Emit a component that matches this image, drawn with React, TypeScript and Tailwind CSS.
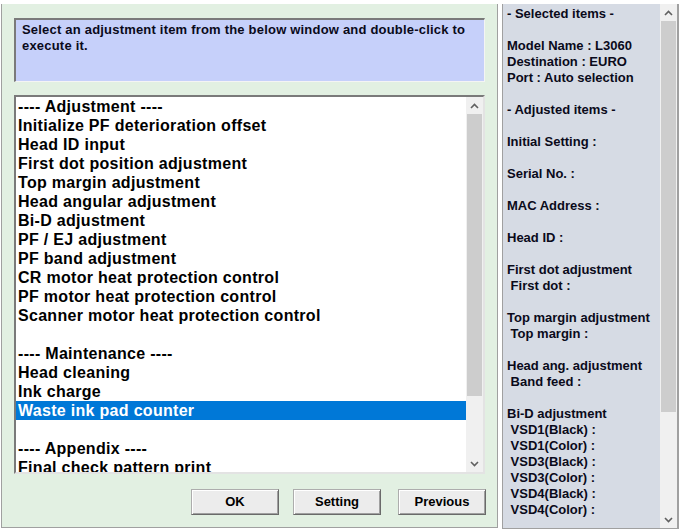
import React from 'react'

const listItems = [
  '---- Adjustment ----',
  'Initialize PF deterioration offset',
  'Head ID input',
  'First dot position adjustment',
  'Top margin adjustment',
  'Head angular adjustment',
  'Bi-D adjustment',
  'PF / EJ adjustment',
  'PF band adjustment',
  'CR motor heat protection control',
  'PF motor heat protection control',
  'Scanner motor heat protection control',
  '',
  '---- Maintenance ----',
  'Head cleaning',
  'Ink charge',
  'Waste ink pad counter',
  '',
  '---- Appendix ----',
  'Final check pattern print',
]

const infoLines = [
  '- Selected items -',
  '',
  'Model Name : L3060',
  'Destination : EURO',
  'Port : Auto selection',
  '',
  '- Adjusted items -',
  '',
  'Initial Setting :',
  '',
  'Serial No. :',
  '',
  'MAC Address :',
  '',
  'Head ID :',
  '',
  'First dot adjustment',
  ' First dot :',
  '',
  'Top margin adjustment',
  ' Top margin :',
  '',
  'Head ang. adjustment',
  ' Band feed :',
  '',
  'Bi-D adjustment',
  ' VSD1(Black) :',
  ' VSD1(Color) :',
  ' VSD3(Black) :',
  ' VSD3(Color) :',
  ' VSD4(Black) :',
  ' VSD4(Color) :',
]

const Arrow = ({ down }: { down?: boolean }) => (
  <svg width="9" height="6" viewBox="0 0 9 6" className={down ? 'rotate-180' : ''}>
    <path d="M1 5 L4.5 1.5 L8 5" fill="none" stroke="#606060" strokeWidth="1.6" />
  </svg>
)

// windows style vertical scrollbar
function ScrollBar({ thumbHeight }: { thumbHeight: number }) {
  return (
    <div className="w-[17px] h-full flex flex-col bg-[#f0f0f0] shrink-0">
      <div className="h-[17px] flex items-center justify-center">
        <Arrow />
      </div>
      <div className="bg-[#cdcdcd] mx-[1px]" style={{ height: thumbHeight }} />
      <div className="flex-1" />
      <div className="h-[17px] flex items-center justify-center">
        <Arrow down />
      </div>
    </div>
  )
}

function Button({ label, className }: { label: string; className?: string }) {
  return (
    <div
      className={
        'w-[88px] h-[26px] flex items-center justify-center bg-[#ececec] border border-[#adadad] border-b-[#6a6a6a] border-r-[#6a6a6a] shadow-[inset_1px_1px_0_#ffffff,inset_-1px_-1px_0_#a0a0a0] text-[13px] font-bold text-black ' +
        (className || '')
      }
    >
      {label}
    </div>
  )
}

export default function App() {
  return (
    <div className="w-[679px] h-[532px] bg-white flex pt-[4px] font-['Liberation_Sans',Arial,sans-serif] overflow-hidden">
      {/* Left panel */}
      <div className="w-[497px] h-[524px] ml-[1px] bg-[#e2f0e2] border-l border-r border-b border-[#a0a0a0] flex flex-col pl-[12px] pt-[14px]">
        <div className="w-[471px] h-[64px] bg-[#c6d0fa] border-t-2 border-l-2 border-[#7a7a7a] border-b border-r border-b-[#f4f4f4] border-r-[#f4f4f4] px-[6px] pt-[2px] text-[13px] font-bold leading-[16px] tracking-[0.2px] text-[#0a0a1a]">
          Select an adjustment item from the below window and double-click to execute it.
        </div>

        <div className="w-[471px] h-[379px] mt-[13px] bg-white border-t-2 border-l-2 border-[#7a7a7a] border-b-2 border-r-2 border-b-[#e3e3e3] border-r-[#e3e3e3] flex">
          <div className="flex-1 overflow-hidden">
            {listItems.map((item, i) => (
              <div
                key={i}
                className={
                  'h-[19px] leading-[19px] px-[2px] text-[16px] font-bold tracking-[0.3px] whitespace-pre ' +
                  (item === 'Waste ink pad counter' ? 'bg-[#0078d7] text-white' : 'text-black')
                }
              >
                {item}
              </div>
            ))}
          </div>
          <ScrollBar thumbHeight={282} />
        </div>

        <div className="flex mt-[15px] pl-[177px]">
          <Button label="OK" />
          <Button label="Setting" className="ml-[14px]" />
          <Button label="Previous" className="ml-[17px]" />
        </div>
      </div>

      {/* Right panel */}
      <div className="w-[177px] h-[525px] ml-[4px] bg-[#d6dbe4] border-l border-r-2 border-b border-[#a0a0a0] flex">
        <div className="flex-1 overflow-hidden pl-[4px] pt-[2px]">
          {infoLines.map((line, i) => (
            <div key={i} className="h-[16px] leading-[16px] text-[13px] font-bold text-[#0a0a1a] whitespace-pre">
              {line}
            </div>
          ))}
        </div>
        <ScrollBar thumbHeight={391} />
      </div>
    </div>
  )
}
